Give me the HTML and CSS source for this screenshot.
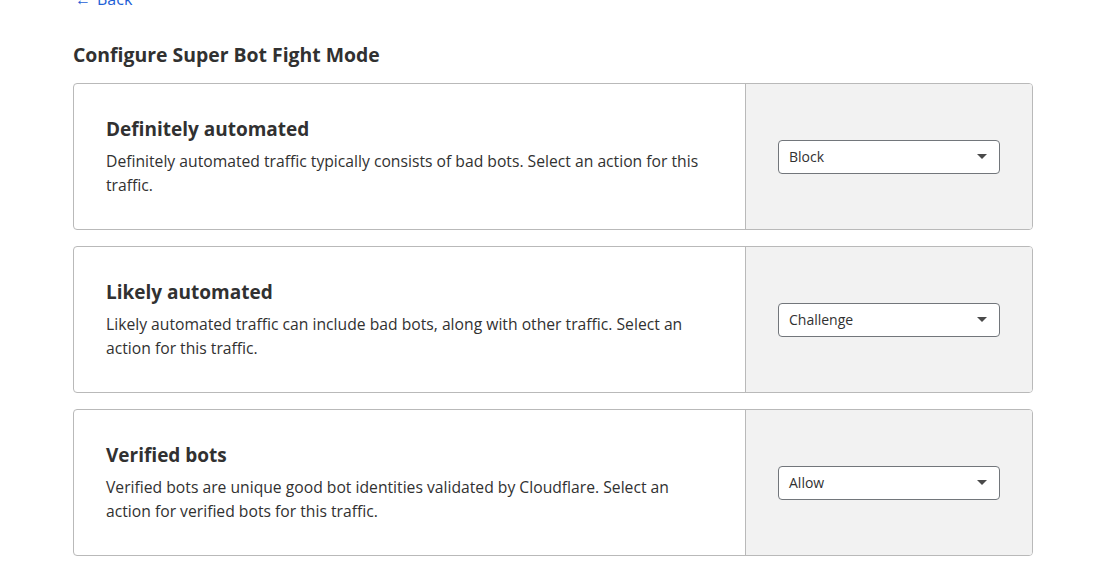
FILE: index.html
```html
<!DOCTYPE html>
<html lang="en">
<head>
<meta charset="utf-8">
<title>Configure Super Bot Fight Mode</title>
<link rel="stylesheet" href="styles.css">
</head>
<body>
<main class="page">
  <a class="back" href="#"><span class="arrow">←</span>Back</a>
  <h1 class="heading">Configure Super Bot Fight Mode</h1>

  <section class="card">
    <div class="card-body">
      <h2 class="card-title">Definitely automated</h2>
      <p class="card-desc">Definitely automated traffic typically consists of bad bots. Select an action for this traffic.</p>
    </div>
    <div class="card-side">
      <div class="select"><span>Block</span><span class="caret"></span></div>
    </div>
  </section>

  <section class="card">
    <div class="card-body">
      <h2 class="card-title">Likely automated</h2>
      <p class="card-desc">Likely automated traffic can include bad bots, along with other traffic. Select an action for this traffic.</p>
    </div>
    <div class="card-side">
      <div class="select"><span>Challenge</span><span class="caret"></span></div>
    </div>
  </section>

  <section class="card">
    <div class="card-body">
      <h2 class="card-title">Verified bots</h2>
      <p class="card-desc">Verified bots are unique good bot identities validated by Cloudflare. Select an action for verified bots for this traffic.</p>
    </div>
    <div class="card-side">
      <div class="select"><span>Allow</span><span class="caret"></span></div>
    </div>
  </section>
</main>
</body>
</html>
```

FILE: styles.css
```css
html, body {
  margin: 0;
  padding: 0;
  background: #ffffff;
}
body {
  font-family: "Open Sans", "Noto Sans", sans-serif;
  color: #313131;
  overflow: hidden;
}
.page {
  width: 960px;
  margin-left: 73px;
  display: flex;
  flex-direction: column;
}
.back {
  display: block;
  margin-top: -13px;
  margin-left: 2px;
  font-size: 16px;
  line-height: 24px;
  color: #1f5fd6;
  text-decoration: none;
}
.arrow {
  margin-right: 6px;
}
.heading {
  margin: 30px 0 14px;
  font-size: 19.4px;
  line-height: 28px;
  font-weight: 700;
  color: #313131;
}
.card {
  display: flex;
  border: 1px solid #b9b9b9;
  border-radius: 4px;
  overflow: hidden;
  margin-bottom: 16px;
}
.card-body {
  flex: 1;
  padding: 31px 40px 32px 32px;
  display: flex;
  flex-direction: column;
  justify-content: center;
}
.card-title {
  margin: 0 0 6px;
  font-size: 19px;
  line-height: 28px;
  font-weight: 700;
  color: #313131;
}
.card-desc {
  margin: 0;
  font-size: 15.7px;
  line-height: 24px;
  color: #313131;
}
.card-side {
  width: 254px;
  flex: none;
  border-left: 1px solid #b9b9b9;
  background: #f2f2f2;
  padding-left: 32px;
  display: flex;
  align-items: center;
}
.select {
  box-sizing: border-box;
  width: 222px;
  height: 34px;
  background: #ffffff;
  border: 1px solid #72767b;
  border-radius: 4px;
  padding: 0 12px 1px 10px;
  display: flex;
  align-items: center;
  justify-content: space-between;
  font-size: 14px;
  color: #313131;
}
.caret {
  width: 0;
  height: 0;
  border-left: 5px solid transparent;
  border-right: 5px solid transparent;
  border-top: 5px solid #4a4a4a;
}
```
